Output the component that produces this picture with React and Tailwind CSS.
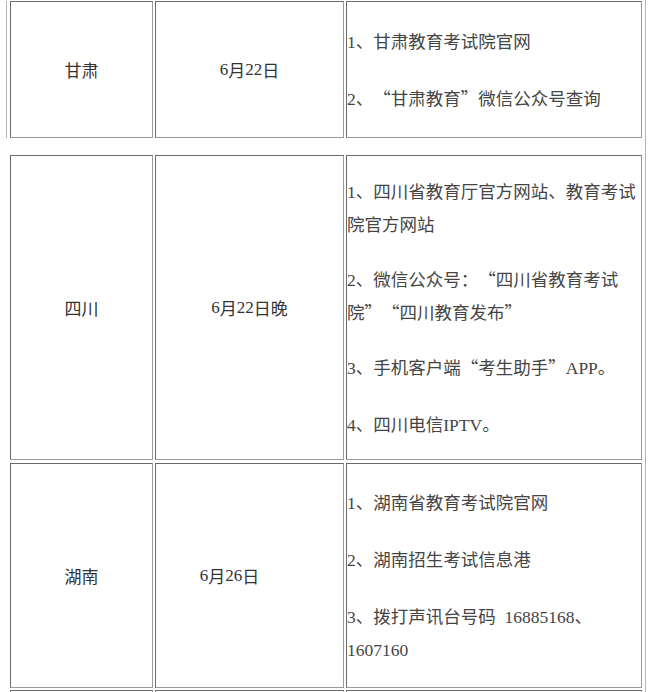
import React from "react";

function Rich({ text }) {
  const parts = text.split(/([A-Za-z0-9]+|[“”：]| )/);
  return (
    <>
      {parts.map((p, i) => {
        if (p === "") return null;
        if (/^[A-Za-z0-9]+$/.test(p))
          return (
            <span key={i} className="font-['Liberation_Serif',serif]">
              {p}
            </span>
          );
        if (p === "“")
          return (
            <span key={i} className="inline-block w-[1em] text-right">
              “
            </span>
          );
        if (p === "”")
          return (
            <span key={i} className="inline-block w-[1em] text-left">
              ”
            </span>
          );
        if (p === "：")
          return (
            <span key={i} className="inline-block w-[1em] text-center">
              ：
            </span>
          );
        if (p === " ") return <span key={i} className="inline-block w-[0.5em]" />;
        return <span key={i}>{p}</span>;
      })}
    </>
  );
}

function Cell({ className = "", children }) {
  return (
    <div
      className={
        "flex items-center border border-t-[#6b6b6b] border-l-[#6b6b6b] border-b-[#9a9a9a] border-r-[#9a9a9a] " +
        className
      }
    >
      {children}
    </div>
  );
}

function Row({ h, name, date, dateClass = "", items }) {
  return (
    <div className="flex gap-[2px]" style={{ height: h }}>
      <Cell className="w-[143px] justify-center text-[17px] text-[#333]">{name}</Cell>
      <Cell className={"w-[189px] justify-center text-[17px] text-[#333] " + dateClass}>
        <Rich text={date} />
      </Cell>
      <Cell className="w-[296px] pl-[0px]">
        <div className="flex flex-col gap-[24px] text-[17.5px] leading-[31px] text-[#454545]">
          {items.map((lines, i) => (
            <div key={i} className="flex flex-col">
              {lines.map((l, j) => (
                <div key={j} className="whitespace-nowrap">
                  <Rich text={l} />
                </div>
              ))}
            </div>
          ))}
        </div>
      </Cell>
    </div>
  );
}

export default function App() {
  return (
    <div className="w-[653px] h-[692px] overflow-hidden bg-white font-['Noto_Sans_CJK_SC',sans-serif]">
      <div className="w-[646px] pl-[6px] border-r border-[#b5b5b5] pt-[1px]">
        <div className="border-l border-[#b5b5b5] pl-[3px] pr-[3px]">
          <Row
            h={137}
            name="甘肃"
            date="6月22日"
            items={[["1、甘肃教育考试院官网"], ["2、“甘肃教育”微信公众号查询"]]}
          />
        </div>
        <div className="h-[17px]" />
        <div className="pl-[4px] pr-[3px] flex flex-col">
          <Row
            h={305}
            name="四川"
            date="6月22日晚"
            items={[
              ["1、四川省教育厅官方网站、教育考试", "院官方网站"],
              ["2、微信公众号：“四川省教育考试", "院”“四川教育发布”"],
              ["3、手机客户端“考生助手”APP。"],
              ["4、四川电信IPTV。"],
            ]}
          />
          <div className="h-[3px]" />
          <Row
            h={225}
            name="湖南"
            date="6月26日"
            dateClass="pr-[40px]"
            items={[
              ["1、湖南省教育考试院官网"],
              ["2、湖南招生考试信息港"],
              ["3、拨打声讯台号码 16885168、", "1607160"],
            ]}
          />
          <div className="h-[2px]" />
          <Row h={60} name="" date="" items={[]} />
        </div>
      </div>
    </div>
  );
}
